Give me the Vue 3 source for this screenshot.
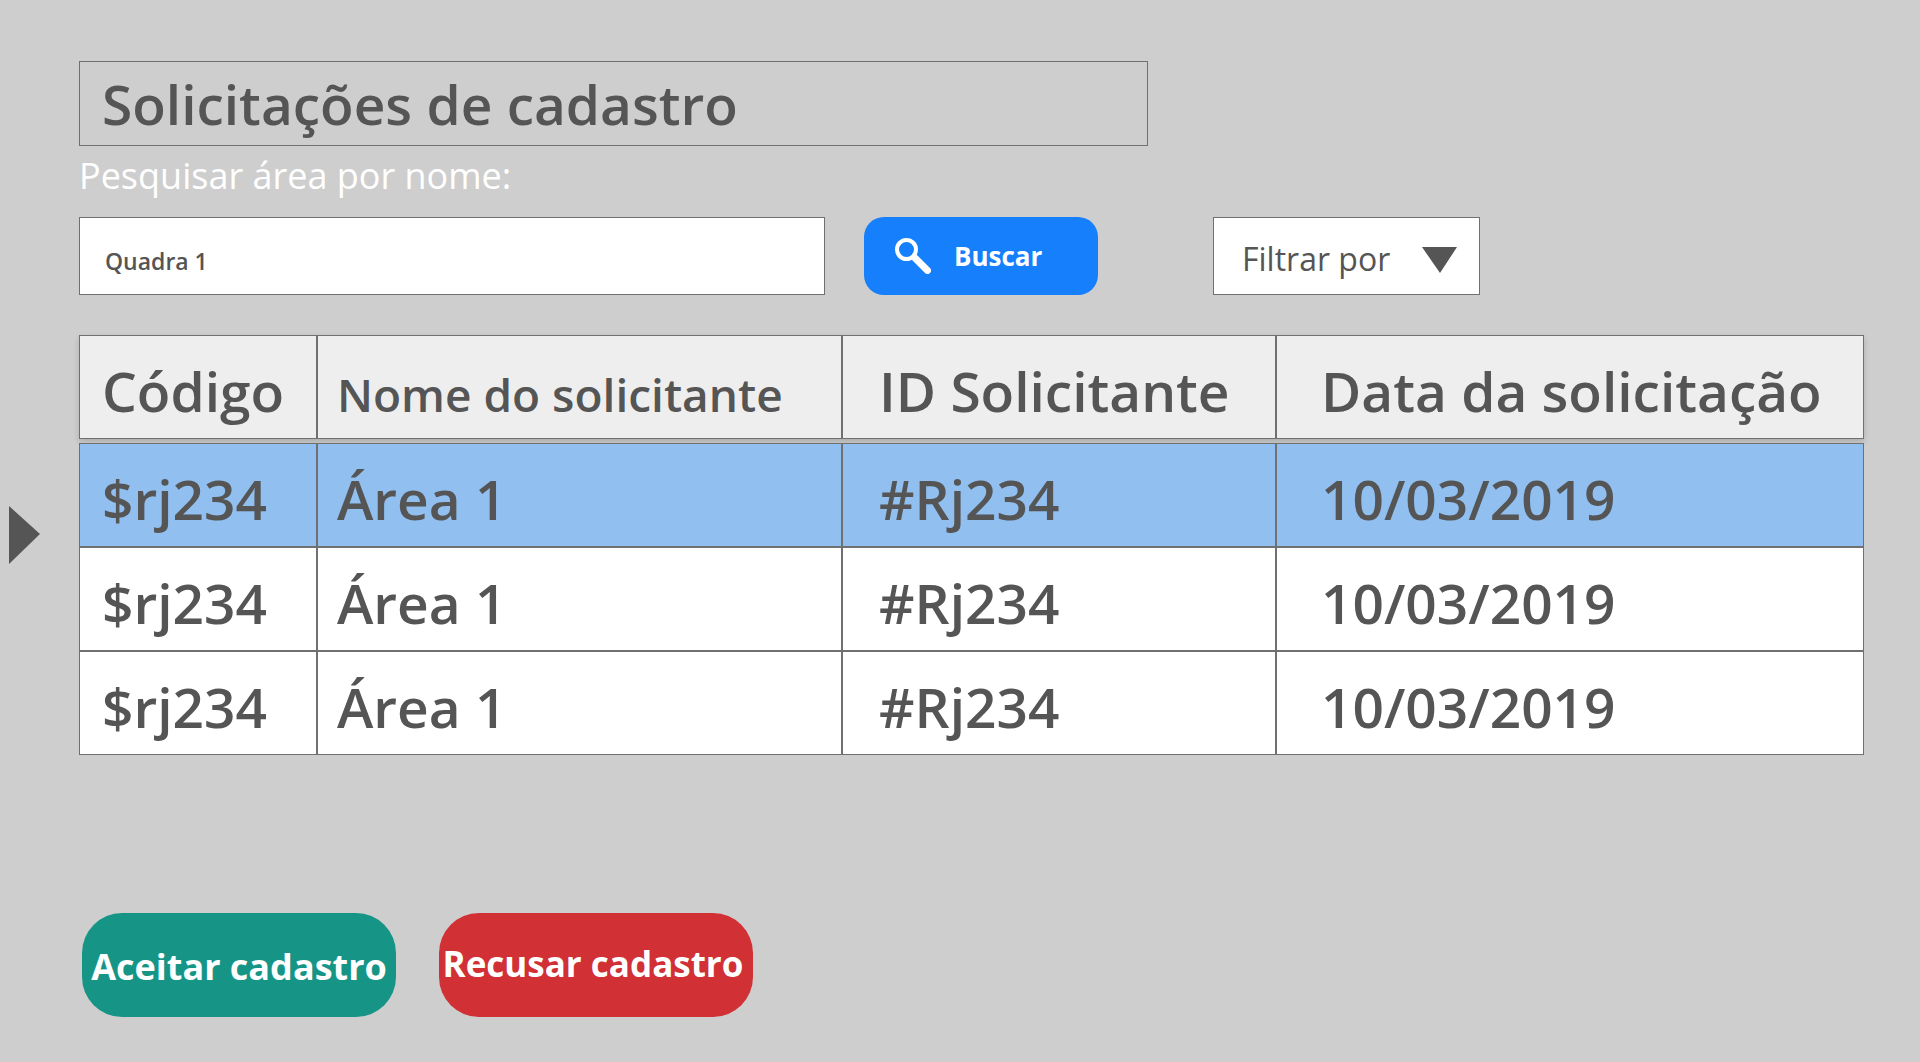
<script setup>
import { ref } from 'vue'

const search = ref('Quadra 1')
const filter = ref('')
const selected = ref(0)
const requests = ref([
  { code: '$rj234', name: 'Área 1', requester: '#Rj234', date: '10/03/2019' },
  { code: '$rj234', name: 'Área 1', requester: '#Rj234', date: '10/03/2019' },
  { code: '$rj234', name: 'Área 1', requester: '#Rj234', date: '10/03/2019' }
])
</script>

<template>
  <div class="page">
    <aside class="rail">
      <button class="rail-toggle" type="button" aria-label="Abrir menu">
        <svg viewBox="0 0 31 58" width="31" height="58" aria-hidden="true">
          <path d="M0 0 31 28 0 58Z" fill="#555" />
        </svg>
      </button>
    </aside>

    <main class="content">
      <h1 class="title">Solicitações de cadastro</h1>

      <form class="search" @submit.prevent>
        <label class="search-label" for="area">Pesquisar área por nome:</label>
        <div class="search-row">
          <input id="area" v-model="search" class="search-input" type="text" />
          <button class="search-button" type="submit">
            <svg viewBox="0 0 36 36" width="36" height="36" aria-hidden="true">
              <circle cx="11.500" cy="11.500" r="9.500" fill="none" stroke="#fff" stroke-width="4" />
              <path d="M20 20 32.500 32.500" stroke="#fff" stroke-width="7" stroke-linecap="round" />
            </svg>
            <span>Buscar</span>
          </button>
          <div class="filter">
            <select v-model="filter" class="filter-select" aria-label="Filtrar por">
              <option value="">Filtrar por</option>
            </select>
            <svg class="filter-arrow" viewBox="0 0 35 26" width="35" height="26" aria-hidden="true">
              <path d="M0 0H35L18 26Z" fill="#555" />
            </svg>
          </div>
        </div>
      </form>

      <table class="requests">
        <colgroup>
          <col class="col-code" />
          <col class="col-name" />
          <col class="col-requester" />
          <col />
        </colgroup>
        <thead>
          <tr>
            <th scope="col">Código</th>
            <th scope="col" class="name small">Nome do solicitante</th>
            <th scope="col" class="wide">ID Solicitante</th>
            <th scope="col" class="date">Data da solicitação</th>
          </tr>
        </thead>
        <tbody>
          <tr
            v-for="(item, index) in requests"
            :key="index"
            :class="{ selected: index === selected }"
            @click="selected = index"
          >
            <td>{{ item.code }}</td>
            <td class="name">{{ item.name }}</td>
            <td class="wide">{{ item.requester }}</td>
            <td class="date">{{ item.date }}</td>
          </tr>
        </tbody>
      </table>

      <div class="actions">
        <button class="action accept" type="button">Aceitar cadastro</button>
        <button class="action refuse" type="button">Recusar cadastro</button>
      </div>
    </main>
  </div>
</template>

<style>
body {
  background: #cecece;
}
</style>

<style scoped>
.page {
  display: flex;
  min-height: 100vh;
  box-sizing: border-box;
  color: #555;
  font-family: "Open Sans", "Noto Sans", sans-serif;
}

.page * {
  box-sizing: border-box;
}

button,
input,
select {
  margin: 0;
  font-family: inherit;
  color: inherit;
}

button {
  border: 0;
  cursor: pointer;
}

.rail {
  display: flex;
  flex: 0 0 79px;
  align-items: center;
  padding: 8px 0 0 9px;
}

.rail-toggle {
  padding: 0;
  background: none;
}

.rail-toggle svg {
  display: block;
}

.content {
  flex: 1;
  min-width: 0;
  padding: 61px 56px 45px 0;
}

.title {
  max-width: 1069px;
  height: 85px;
  margin: 0;
  padding-left: 22px;
  border: 1px solid #707070;
  font-size: 55px;
  font-weight: 600;
  line-height: 84px;
}

.search-label {
  display: block;
  height: 71px;
  color: #fff;
  font-size: 36px;
  line-height: 60px;
}

.search-row {
  display: flex;
}

.search-input {
  width: 746px;
  height: 78px;
  padding: 10px 25px 0;
  border: 1px solid #707070;
  background: #fff;
  font-size: 23px;
  font-weight: 600;
}

.search-button {
  display: flex;
  align-items: center;
  gap: 23px;
  width: 234px;
  height: 78px;
  margin-left: 39px;
  padding: 0 0 0 31px;
  border-radius: 20px;
  background: #167ffc;
  color: #fff;
  font-size: 26px;
  font-weight: 700;
}

.filter {
  position: relative;
  width: 267px;
  margin-left: 115px;
}

.filter-select {
  width: 100%;
  height: 78px;
  padding: 4px 28px 0;
  border: 1px solid #707070;
  border-radius: 0;
  background: #fff;
  appearance: none;
  font-size: 32px;
}

.filter-arrow {
  position: absolute;
  top: 30px;
  right: 23px;
  pointer-events: none;
}

.requests {
  width: 100%;
  margin-top: 40px;
  border-spacing: 0;
  table-layout: fixed;
  font-size: 55px;
  font-weight: 600;
  line-height: 60px;
}

.col-code {
  width: 238px;
}

.col-name {
  width: 525px;
}

.col-requester {
  width: 434px;
}

.requests thead {
  box-shadow: 0 3px 6px rgba(0, 0, 0, 0.16);
}

.requests tbody::before {
  display: block;
  height: 4px;
  content: "";
}

.requests th,
.requests td {
  height: 104px;
  padding: 25px 0 0 22px;
  border: 1px solid #707070;
  background: #fff;
  font-weight: 600;
  text-align: left;
  vertical-align: baseline;
  white-space: nowrap;
}

.requests th {
  background: #eee;
}

.requests .name {
  padding-left: 19px;
}

.requests .small {
  font-size: 46px;
}

.requests .wide {
  padding-left: 36px;
}

.requests .date {
  padding-left: 44px;
}

.requests .selected td {
  background: #90bff0;
}

.actions {
  display: flex;
  gap: 43px;
  margin: 158px 0 0 3px;
}

.action {
  width: 314px;
  height: 104px;
  padding: 0;
  border-radius: 40px;
  color: #fff;
  font-size: 36px;
  font-weight: 700;
  white-space: nowrap;
}

.accept {
  padding-top: 2px;
  background: #169587;
}

.refuse {
  padding: 0 6px 4px 0;
  background: #d13034;
  font-size: 35px;
}
</style>
